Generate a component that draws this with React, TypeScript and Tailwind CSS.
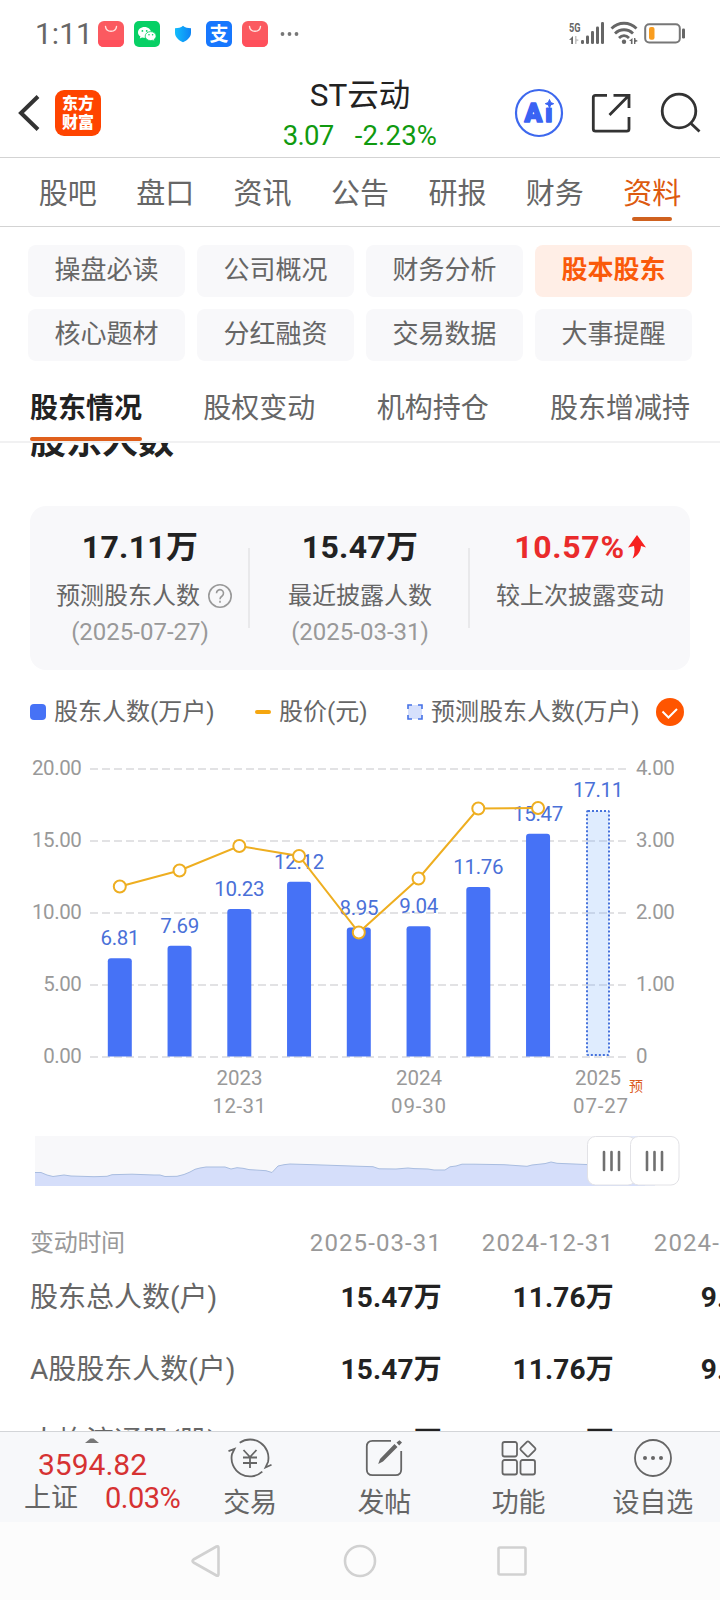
import type { ReactNode } from 'react'
import { clsx } from 'clsx'

const mainTabs = ['股吧', '盘口', '资讯', '公告', '研报', '财务', '资料']

const chips = [
  '操盘必读', '公司概况', '财务分析', '股本股东',
  '核心题材', '分红融资', '交易数据', '大事提醒',
]

const subTabs = ['股东情况', '股权变动', '机构持仓', '股东增减持']

const bars = [
  { value: 6.81, price: 146.5 },
  { value: 7.69, price: 130.5 },
  { value: 10.23, price: 106 },
  { value: 12.12, price: 116 },
  { value: 8.95, price: 192.5 },
  { value: 9.04, price: 138.5 },
  { value: 11.76, price: 68.5 },
  { value: 15.47, price: 68 },
]

const axis = [
  { y: 29, left: '20.00', right: '4.00' },
  { y: 101, left: '15.00', right: '3.00' },
  { y: 173, left: '10.00', right: '2.00' },
  { y: 245, left: '5.00', right: '1.00' },
  { y: 317, left: '0.00', right: '0' },
]

const history =
  '35,36.5 41,36.5 47,39 53,40.5 64,39 71,40 94,40.7 107,40.3 112,38.7 132,38.2 154,39 160,39 165,40.5 177,40.3 184,38.5 190,36 195,33.3 200,32 206,31 225,31 231,33 237,31.7 243,32.3 249,33.6 266,34.7 272,36.5 278,30 284,28.7 290,28 313,28.7 360,30.3 373,30.7 379,32.8 396,33 408,32 414,32.6 428,33 434,34 445,34 450,30.8 456,30 462,28.2 474,28.2 504,28.7 527,30.3 532,29 545,27.6 551,26 557,27.3 588,28.6'

const rows = [
  { label: '股东总人数(户)', values: ['15.47万', '11.76万', '9.04万'] },
  { label: 'A股股东人数(户)', values: ['15.47万', '11.76万', '9.04万'] },
  { label: '人均流通股(股)', values: ['1.24万', '1.63万', '2.12万'] },
]

function BagIcon() {
  return (
    <svg width="26" height="26" viewBox="0 0 26 26">
      <rect width="26" height="26" rx="6" fill="#fb5a60" />
      <path d="M0 19h26v1q0 6-6 6H6q-6 0-6-6z" fill="#ff4f5b" />
      <path d="M7.500 5.500c.6 6.400 10.400 6.400 11 0" fill="none" stroke="#ffe3e0" strokeWidth="1.400" strokeLinecap="round" />
    </svg>
  )
}

function WechatIcon() {
  return (
    <svg width="26" height="26" viewBox="0 0 26 26">
      <rect width="26" height="26" rx="5" fill="#07d065" />
      <path d="M10.500 6C6.900 6 4 8.400 4 11.400c0 1.700.9 3.200 2.400 4.200l-.6 2 2.300-1.200c.8.2 1.600.3 2.400.3 3.600 0 6.500-2.400 6.500-5.300S14.100 6 10.500 6z" fill="#fff" />
      <path d="M16.700 10.600c-3.100 0-5.500 2-5.500 4.500s2.400 4.500 5.500 4.500c.7 0 1.300-.1 1.900-.3l1.900 1-.5-1.700c1.300-.8 2.100-2.100 2.100-3.500 0-2.500-2.400-4.500-5.400-4.500z" fill="#fff" stroke="#07d065" strokeWidth=".8" />
      <g fill="#07d065">
        <circle cx="8.400" cy="9.900" r=".9" />
        <circle cx="12.700" cy="9.900" r=".9" />
        <circle cx="15" cy="13.800" r=".8" />
        <circle cx="18.600" cy="13.800" r=".8" />
      </g>
    </svg>
  )
}

function ShieldIcon() {
  return (
    <svg width="18" height="18" viewBox="0 0 18 18">
      <defs>
        <linearGradient id="shield" x1="0" x2="1">
          <stop offset="0" stopColor="#12bdfb" />
          <stop offset="1" stopColor="#0d83f5" />
        </linearGradient>
      </defs>
      <path d="M9 .8C7 2.600 4 3.300 1 3.300v4.500c0 4.500 4 7.800 8 9.400 4-1.600 8-4.900 8-9.400V3.300c-3 0-6-.7-8-2.500z" fill="url(#shield)" />
    </svg>
  )
}

function StatusBar() {
  return (
    <div className="flex h-[68px] shrink-0 items-center pr-[34px] pl-[35px] text-[#666]">
      <span className="w-[63px] text-[30px] leading-[34px] whitespace-nowrap">1:11</span>
      <BagIcon />
      <span className="ml-2.5"><WechatIcon /></span>
      <span className="mx-[14px]"><ShieldIcon /></span>
      <span className="flex size-[26px] items-center justify-center rounded-[5px] bg-[#1777fe] text-[19px] leading-none font-bold text-white">支</span>
      <span className="ml-2.5"><BagIcon /></span>
      <svg className="ml-3" width="20" height="6" viewBox="0 0 20 6" fill="#777">
        <circle cx="2.500" cy="3" r="1.900" />
        <circle cx="9.500" cy="3" r="1.900" />
        <circle cx="16.500" cy="3" r="1.900" />
      </svg>
      <svg className="ml-auto" width="118" height="26" viewBox="568 22 118 26" fill="#666">
        <text x="569" y="33" fontSize="12" fontWeight="700" textLength="11.500" lengthAdjust="spacingAndGlyphs">5G</text>
        <path d="M569 41l4-4v8h-1.800v-4.200z" />
        <path d="M575 37h1.500v3l2.500 1-2.500 1.500V45H575z" fill="#c4c4c4" />
        <rect x="581" y="41" width="3" height="4" rx="1.300" />
        <rect x="586" y="36.500" width="3" height="8.500" rx="1.300" />
        <rect x="591" y="32" width="3" height="13" rx="1.300" />
        <rect x="596" y="27.500" width="3" height="17.500" rx="1.300" />
        <rect x="601" y="23" width="3" height="22" rx="1.300" />
        <g fill="none" stroke="#666" strokeWidth="2.800">
          <path d="M611.500 29.500c7-7 18-7 25 0" />
          <path d="M615 34.500c5-5 13-5 18 0" />
          <path d="M619 39c3-3 7-3 10 0" />
        </g>
        <circle cx="624" cy="42.700" r="2.200" />
        <path d="M629 42l3.500-3v6h-1.600v-3zM634 39h1.400v1.500l2.600 1.500-2.600 1v2H634z" />
        <rect x="645.200" y="25.200" width="34.600" height="18.200" rx="4" fill="none" stroke="#777" strokeWidth="2" />
        <rect x="649" y="28" width="5.500" height="12.800" rx="2" fill="#f99d1f" />
        <rect x="682" y="29.500" width="3" height="10" rx="1.300" />
      </svg>
    </div>
  )
}

function Header() {
  return (
    <header className="grid h-[90px] shrink-0 grid-cols-[240px_1fr_240px] border-b border-[#d3d3d3]">
      <div className="flex items-center pl-[17px]">
        <svg width="24" height="40" viewBox="0 0 24 40" fill="none" stroke="#333" strokeWidth="4">
          <path d="M21 3.500L4 20 21 36.500" />
        </svg>
        <div className="ml-[14px] flex size-[46px] flex-col items-center justify-center rounded-[9px] bg-[#ff4400] text-[16px] leading-[19px] font-black text-white">
          <span>东方</span>
          <span>财富</span>
        </div>
      </div>
      <div className="flex flex-col items-center pt-[10px]">
        <h1 className="text-[31.500px] leading-[36px] text-[#222]">ST云动</h1>
        <div className="mt-[6px] flex gap-[21px] text-[27.500px] leading-[32px] text-[#109a10]">
          <span className="tracking-[-0.700px]">3.07</span>
          <span className="tracking-[0.200px]">-2.23%</span>
        </div>
      </div>
      <svg width="240" height="89" viewBox="480 68 240 89" fill="none" stroke="#333" strokeWidth="2.800">
        <circle cx="539" cy="113" r="23" stroke="#3d68ee" strokeWidth="2.200" />
        <g fill="#3a63f3" stroke="#3a63f3" fontSize="26" fontWeight="900" strokeLinejoin="round">
          <text x="524.500" y="121.500" strokeWidth="1.600" textLength="28" lengthAdjust="spacing">Ai</text>
        </g>
        <rect x="543.500" y="98" width="11" height="9.500" fill="#fff" stroke="none" />
        <path d="M549.500 99.500l1.200 3 3 1.200-3 1.200-1.200 3-1.200-3-3-1.200 3-1.200z" fill="#3a63f3" stroke="#3a63f3" strokeWidth="1" />
        <path d="M607 95.300h-11.500q-2.200 0-2.200 2.200v31.500q0 2.200 2.200 2.200h31.300q2.200 0 2.200-2.200V117M613.500 95.300H629V108M629 95.300L609.500 115" />
        <circle cx="679" cy="111" r="16.800" />
        <path d="M691 123.500l8.500 8" />
      </svg>
    </header>
  )
}

function MainTabs() {
  return (
    <nav className="grid h-[69px] shrink-0 grid-cols-7 border-b border-[#d3d3d3] px-[19px]">
      {mainTabs.map((tab) => (
        <div
          key={tab}
          className={clsx(
            'flex flex-col items-center pt-[18px] text-[29px] leading-[36px]',
            tab === '资料' ? 'text-[#dd5a10]' : 'text-[#666]',
          )}
        >
          {tab}
          {tab === '资料' && <span className="mt-[5px] h-1 w-10 rounded-full bg-[#cf611f]" />}
        </div>
      ))}
    </nav>
  )
}

function ChipGrid() {
  return (
    <div className="grid shrink-0 grid-cols-4 gap-3 px-7 pt-[18px]">
      {chips.map((chip) => (
        <div
          key={chip}
          className={clsx(
            'h-[52px] rounded-lg text-center text-[26px] leading-[50px]',
            chip === '股本股东' ? 'bg-[#ffeee6] font-bold text-[#fa5a0a]' : 'bg-[#f8f8fa] text-[#666]',
          )}
        >
          {chip}
        </div>
      ))}
    </div>
  )
}

function SubTabs() {
  return (
    <nav className="flex h-[82px] shrink-0 justify-between border-b-2 border-[#f1f1f2] px-[30px]">
      {subTabs.map((tab, i) => (
        <div
          key={tab}
          className={clsx(
            'flex h-20 flex-col justify-between pt-[30px] text-[28px] leading-[36px]',
            i === 0 ? 'font-bold text-[#222]' : 'text-[#666]',
          )}
        >
          {tab}
          {i === 0 && <span className="h-1 rounded-full bg-[#e0601c]" />}
        </div>
      ))}
    </nav>
  )
}

function Stat({ value, label, date }: { value: ReactNode; label: ReactNode; date?: string }) {
  return (
    <div className="flex w-[220px] flex-col items-center pt-[22px]">
      <div className="flex h-[38px] items-center text-[32px] leading-[38px] font-bold tracking-[0.300px] text-[#222]">{value}</div>
      <div className="mt-[14px] flex h-8 items-center text-[24px] leading-8 tracking-normal text-[#666]">{label}</div>
      {date && <div className="mt-1 text-[24px] leading-8 text-[#999]">{date}</div>}
    </div>
  )
}

function StatCard() {
  return (
    <section className="mx-[30px] flex h-[164px] shrink-0 rounded-2xl bg-[#f8f8fa]">
      <Stat
        value="17.11万"
        date="(2025-07-27)"
        label={
          <span className="flex items-center gap-2 pl-2">
            预测股东人数
            <svg width="24" height="24" viewBox="0 0 24 24" fill="none" stroke="#999" strokeWidth="1.600">
              <circle cx="12" cy="12" r="11.200" />
              <path d="M8.500 9.300a3.500 3.500 0 1 1 5.600 2.700c-1.400 1-2.100 1.600-2.100 3.300M12 16.800v2" />
            </svg>
          </span>
        }
      />
      <div className="mt-[42px] -ml-0.5 h-20 w-0.5 bg-[#e9e9eb]" />
      <Stat value="15.47万" label="最近披露人数" date="(2025-03-31)" />
      <div className="mt-[42px] -ml-0.5 h-20 w-0.5 bg-[#e9e9eb]" />
      <Stat
        value={
          <span className="flex items-center gap-[3px] tracking-[0.700px] text-[#ea2b2b]">
            10.57%
            <svg width="18" height="24" viewBox="0 0 18 24" fill="#f7201f">
              <path d="M9 0l9 12.500-5-1.500C12.500 17 9.500 21 4.500 23.500 6.500 19.500 7 15.500 6 11L0 12.500z" />
            </svg>
          </span>
        }
        label="较上次披露变动"
      />
    </section>
  )
}

function Legend() {
  return (
    <div className="mt-[25px] flex h-[34px] shrink-0 items-center pl-[30px] text-[24px] leading-[34px] whitespace-nowrap text-[#666]">
      <span className="mr-2 size-4 rounded bg-[#4672f6]" />
      <span className="w-[201px]">股东人数(万户)</span>
      <span className="mr-2 h-1 w-4 rounded-full bg-[#f5a60f]" />
      <span className="w-[128px]">股价(元)</span>
      <svg className="mr-2" width="16" height="16" viewBox="0 0 16 16">
        <rect x="1" y="1" width="14" height="14" fill="#d6e0fc" />
        <path d="M1 5V1h4M11 1h4v4M15 11v4h-4M5 15H1v-4" fill="none" stroke="#4672e6" strokeWidth="1.600" />
      </svg>
      <span className="w-[225px]">预测股东人数(万户)</span>
      <svg width="28" height="28" viewBox="0 0 28 28">
        <circle cx="14" cy="14" r="14" fill="#ff5500" />
        <path d="M6.500 13.500l6 6 8.500-8.500" fill="none" stroke="#fff" strokeWidth="2" />
      </svg>
    </div>
  )
}

const barX = (i: number) => 119.8 + i * 59.75
const barTop = (value: number) => 316.4 - value * 14.4

function HolderChart() {
  const line = bars.map((bar, i) => `${barX(i)},${bar.price}`).join(' ')

  return (
    <svg className="shrink-0" width="720" height="396" viewBox="0 0 720 396" fontSize="20.500">
      {axis.map(({ y, left, right }) => (
        <g key={y} fill="#999">
          <line x1="90" x2="626" y1={y} y2={y} stroke="#e2e2e4" strokeWidth="2" strokeDasharray="8 4" />
          <text x="81.500" y={y + 6} textAnchor="end" letterSpacing="-.4">{left}</text>
          <text x="636" y={y + 6} letterSpacing="-.4">{right}</text>
        </g>
      ))}
      {bars.map(({ value }, i) => (
        <path
          key={value}
          d={`M${barX(i) - 12} 316.500V${barTop(value) + 3}q0-3 3-3h18q3 0 3 3V316.500z`}
          fill="#4672f6"
        />
      ))}
      <rect x="587" y="71" width="22" height="245" fill="#dfecfe" />
      <g stroke="#c8d5ea" strokeWidth="2" strokeDasharray="8 4">
        <line x1="587" x2="609" y1="101" y2="101" />
        <line x1="587" x2="609" y1="173" y2="173" />
        <line x1="587" x2="609" y1="245" y2="245" />
      </g>
      <rect x="587" y="71" width="22" height="244" rx="1" fill="none" stroke="#4672dc" strokeWidth="2" strokeDasharray="2 2" />
      <g fill="#4a70d8" textAnchor="middle" letterSpacing="-.3">
        {bars.map(({ value }, i) => (
          <text key={value} x={barX(i)} y={barTop(value) - 13}>{value.toFixed(2)}</text>
        ))}
        <text x="598" y="57">17.11</text>
      </g>
      <polyline points={line} fill="none" stroke="#eeae20" strokeWidth="2" />
      {bars.map(({ price }, i) => (
        <circle key={i} cx={barX(i)} cy={price} r="6" fill="#fff" stroke="#eeae20" strokeWidth="2" />
      ))}
      <g fill="#999" textAnchor="middle">
        <text x="239.500" y="345">2023</text>
        <text x="239.500" y="373" letterSpacing=".4">12-31</text>
        <text x="419" y="345">2024</text>
        <text x="419" y="373" letterSpacing=".8">09-30</text>
        <text x="598" y="345">2025</text>
        <text x="601" y="373" letterSpacing=".8">07-27</text>
      </g>
      <text x="629" y="351" fontSize="14" fill="#dc5a1a">预</text>
    </svg>
  )
}

function RangeSlider() {
  return (
    <svg className="shrink-0" width="720" height="50" viewBox="0 0 720 50">
      <rect x="35" width="620" height="50" fill="#f8f8fa" />
      <rect x="600" width="55" height="50" fill="#e4eafa" />
      <polygon points={`35,50 ${history} 645,30 645,50`} fill="#d5defa" />
      <polyline points={history} fill="none" stroke="#a9bde0" />
      {[587.5, 630.5].map((x) => (
        <g key={x}>
          <rect x={x} y=".500" width="48.500" height="48.500" rx="8" fill="#fff" stroke="#e2e2e6" />
          <path d={`M${x + 16.5} 16v18M${x + 24} 16v18M${x + 31.5} 16v18`} stroke="#707070" strokeWidth="2.600" strokeLinecap="round" />
        </g>
      ))}
    </svg>
  )
}

function HolderTable() {
  return (
    <div className="min-h-0 w-[786px] flex-1 overflow-hidden pt-[37px] pl-[30px]">
      <div className="grid h-[40px] grid-cols-[240px_172px_172px_172px] items-center text-right text-[24px] tracking-[1.100px] text-[#999]">
        <span className="text-left tracking-[-0.300px]">变动时间</span>
        <span>2025-03-31</span>
        <span>2024-12-31</span>
        <span>2024-09-30</span>
      </div>
      {rows.map(({ label, values }, i) => (
        <div
          key={label}
          className={clsx('grid h-[72px] grid-cols-[240px_172px_172px_172px] items-center text-[28px]', i === 0 && '-mt-px')}
        >
          <span className="whitespace-nowrap text-[#666]">{label}</span>
          {values.map((value, j) => (
            <span key={j} className="text-right font-bold tracking-[0.200px] text-[#222]">{value}</span>
          ))}
        </div>
      ))}
    </div>
  )
}

function Action({ label, children }: { label: string; children: ReactNode }) {
  return (
    <div className="flex flex-1 flex-col items-center pt-[6px]">
      <svg width="44" height="40" viewBox="-22 -20 44 40" fill="none" stroke="#666" strokeWidth="1.800">
        {children}
      </svg>
      <span className="mt-2 text-[27px] leading-[34px] text-[#666]">{label}</span>
    </div>
  )
}

function BottomBar() {
  return (
    <footer className="flex h-[91px] shrink-0 border-t border-[#d3d5d8] bg-[#f7f8fa]">
      <div className="flex w-[183px] flex-col pl-[24px] whitespace-nowrap">
        <svg className="mt-[6px] ml-[61px]" width="14" height="5" viewBox="0 0 14 5" fill="#777">
          <path d="M0 5l5.500-4.500h3L14 5z" />
        </svg>
        <span className="mt-[5px] pl-[14px] text-[30px] leading-[34px] text-[#d63232]">3594.82</span>
        <div className="flex items-center leading-[32px]">
          <span className="text-[27px] text-[#666]">上证</span>
          <span className="ml-[27px] text-[29px] tracking-[-0.500px] text-[#d63232]">0.03%</span>
        </div>
      </div>
      <Action label="交易">
        <path d="M-10.300-15.300A18.400 18.400 0 0 1 18 4L15.500 9.500l6-2.800M12.300 13.700A18.400 18.400 0 0 1-18-4L-15.500-9l-6 2.200" />
        <path d="M-6.500-8L0-1l6.500-7M0-1v11M-7-.5H7M-7 5H7" />
      </Action>
      <Action label="发帖">
        <path d="M7-17.200h-18.500q-5.700 0-5.700 5.700v23q0 5.700 5.700 5.700h23q5.700 0 5.700-5.700V-7" />
        <path d="M-5.800 6l1.800-5L10.500-14l3 3L-1 3.500zM12.500-15.500l3-2.300 2.500 2.300-2.800 3z" fill="#666" stroke="none" />
      </Action>
      <Action label="功能">
        <rect x="-16.500" y="-16" width="14.500" height="14.500" rx="2" />
        <rect x="-16.500" y="2" width="14.500" height="14.500" rx="2" />
        <rect x="1.500" y="2" width="14.500" height="14.500" rx="2" />
        <rect x="3.200" y="-14.700" width="11.500" height="11.500" rx="1.500" transform="rotate(45 9 -9)" />
      </Action>
      <Action label="设自选">
        <circle r="18" />
        <g fill="#666" stroke="none">
          <circle cx="-8" r="2" />
          <circle r="2" />
          <circle cx="8" r="2" />
        </g>
      </Action>
    </footer>
  )
}

function SystemNav() {
  return (
    <div className="h-[78px] shrink-0 bg-[#fcfcfc]">
      <svg width="720" height="78" viewBox="0 0 720 78" fill="none" stroke="#d1d1d1" strokeWidth="2.600" strokeLinejoin="round">
        <path d="M193.500 37.500L216.500 24.500q2-1 2 1.500v26q0 2.500-2 1.500L193.500 40.500q-2-1.500 0-3z" />
        <circle cx="360" cy="39" r="15" />
        <rect x="498.500" y="25.500" width="27" height="27" rx="1.500" />
      </svg>
    </div>
  )
}

export default function App() {
  return (
    <div className="flex h-[1600px] w-[720px] flex-col overflow-hidden bg-white font-['Roboto','Noto_Sans_CJK_SC',sans-serif]">
      <StatusBar />
      <Header />
      <MainTabs />
      <ChipGrid />
      <SubTabs />
      <div className="h-[63px] shrink-0 overflow-hidden pl-[30px]">
        <h2 className="-mt-[19px] text-[36px] leading-[36px] font-bold text-[#222]">股东人数</h2>
      </div>
      <StatCard />
      <Legend />
      <div className="mt-[11px] flex shrink-0 flex-col">
        <HolderChart />
        <RangeSlider />
      </div>
      <HolderTable />
      <BottomBar />
      <SystemNav />
    </div>
  )
}
